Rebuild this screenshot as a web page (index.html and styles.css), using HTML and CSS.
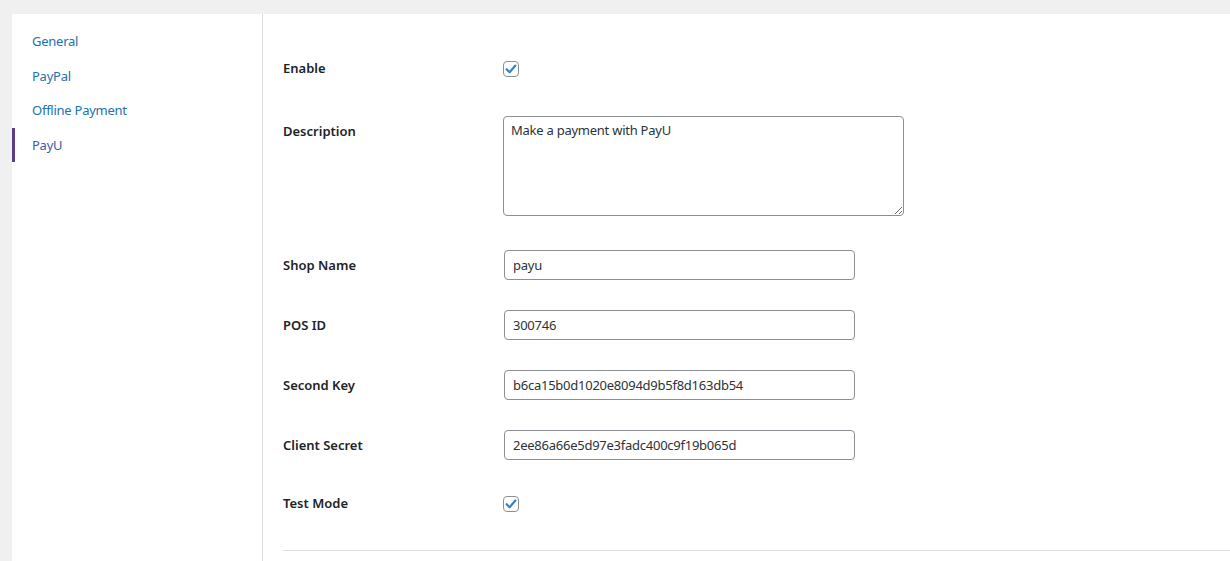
FILE: index.html
```html
<!DOCTYPE html>
<html lang="en">
<head>
<meta charset="utf-8">
<title>Payment Settings</title>
<link rel="stylesheet" href="styles.css">
</head>
<body>
<div class="wrap">
  <div class="panel">
    <nav class="sidebar">
      <a class="nav-item" href="#">General</a>
      <a class="nav-item" href="#">PayPal</a>
      <a class="nav-item" href="#">Offline Payment</a>
      <a class="nav-item active" href="#">PayU</a>
    </nav>
    <main class="content">
      <div class="row row-check row-first">
        <label class="label">Enable</label>
        <div class="field"><span class="checkbox"><svg viewBox="0 0 16 16" width="16" height="16"><path d="M3.6 8.2 L6.6 11.2 L12.4 4.6" fill="none" stroke="#3582c4" stroke-width="2.2" stroke-linecap="round" stroke-linejoin="round"/></svg></span></div>
      </div>
      <div class="row row-area">
        <label class="label label-input">Description</label>
        <div class="field"><textarea class="textarea">Make a payment with PayU</textarea></div>
      </div>
      <div class="row">
        <label class="label label-input">Shop Name</label>
        <div class="field"><input class="input" type="text" value="payu"></div>
      </div>
      <div class="row">
        <label class="label label-input">POS ID</label>
        <div class="field"><input class="input" type="text" value="300746"></div>
      </div>
      <div class="row">
        <label class="label label-input">Second Key</label>
        <div class="field"><input class="input" type="text" value="b6ca15b0d1020e8094d9b5f8d163db54"></div>
      </div>
      <div class="row">
        <label class="label label-input">Client Secret</label>
        <div class="field"><input class="input" type="text" value="2ee86a66e5d97e3fadc400c9f19b065d"></div>
      </div>
      <div class="row row-check row-last">
        <label class="label">Test Mode</label>
        <div class="field"><span class="checkbox"><svg viewBox="0 0 16 16" width="16" height="16"><path d="M3.6 8.2 L6.6 11.2 L12.4 4.6" fill="none" stroke="#3582c4" stroke-width="2.2" stroke-linecap="round" stroke-linejoin="round"/></svg></span></div>
      </div>
      <hr class="divider">
    </main>
  </div>
</div>
</body>
</html>
```

FILE: styles.css
```css
* { box-sizing: border-box; }
html, body { margin: 0; padding: 0; }
body {
  background: #f0f0f1;
  font-family: "Noto Sans", "Open Sans", sans-serif;
  font-size: 13px;
  color: #1d2327;
  overflow: hidden;
  height: 561px;
}
.wrap {
  padding: 14px 0 0 12px;
  height: 100%;
}
.panel {
  background: #fff;
  display: flex;
  height: 100%;
}
.sidebar {
  width: 251px;
  flex: none;
  border-right: 1px solid #dcdcde;
  padding-top: 10px;
  display: flex;
  flex-direction: column;
}
.nav-item {
  display: block;
  padding: 8px 20px;
  line-height: 18.5px;
  color: #2271b1;
  text-decoration: none;
  letter-spacing: -0.25px;
}
.nav-item.active {
  border-left: 3px solid #5b3e86;
  padding-left: 17px;
  color: #3f5aa3;
}
.content {
  flex: 1;
  padding: 32px 0 0 20px;
}
.row {
  display: flex;
  align-items: flex-start;
  padding: 15px 0;
}
.row-first { padding-bottom: 24px; }
.row-area { padding-bottom: 19px; }
.row-last { padding-top: 21px; padding-bottom: 0; }
.label {
  width: 220px;
  flex: none;
  font-weight: 600;
  line-height: 17px;
  color: #1d2327;
}
.label-input { padding-top: 7px; }
.row-check .label { padding-top: 0; margin-top: -1px; }
.field { display: flex; }
.checkbox {
  display: block;
  width: 16px;
  height: 16px;
  border: 1px solid #8c8f94;
  border-radius: 4px;
  background: #fff;
  position: relative;
}
.checkbox svg {
  position: absolute;
  left: -1px;
  top: -1px;
}
.textarea {
  display: block;
  width: 401px;
  height: 100px;
  border: 1px solid #8c8f94;
  border-radius: 4px;
  padding: 4px 7px;
  font-family: inherit;
  font-size: 13px;
  line-height: 18px;
  letter-spacing: -0.25px;
  color: #2c3338;
  resize: both;
  margin: 0;
}
.input {
  display: block;
  width: 351px;
  height: 30px;
  margin: 0 0 0 1px;
  border: 1px solid #8c8f94;
  border-radius: 4px;
  padding: 0 8px;
  font-family: inherit;
  font-size: 13px;
  letter-spacing: -0.25px;
  color: #2c3338;
  background: #fff;
}
.divider {
  border: 0;
  border-top: 1px solid #dcdcde;
  margin: 38px 0 0 0;
  height: 0;
}
```
